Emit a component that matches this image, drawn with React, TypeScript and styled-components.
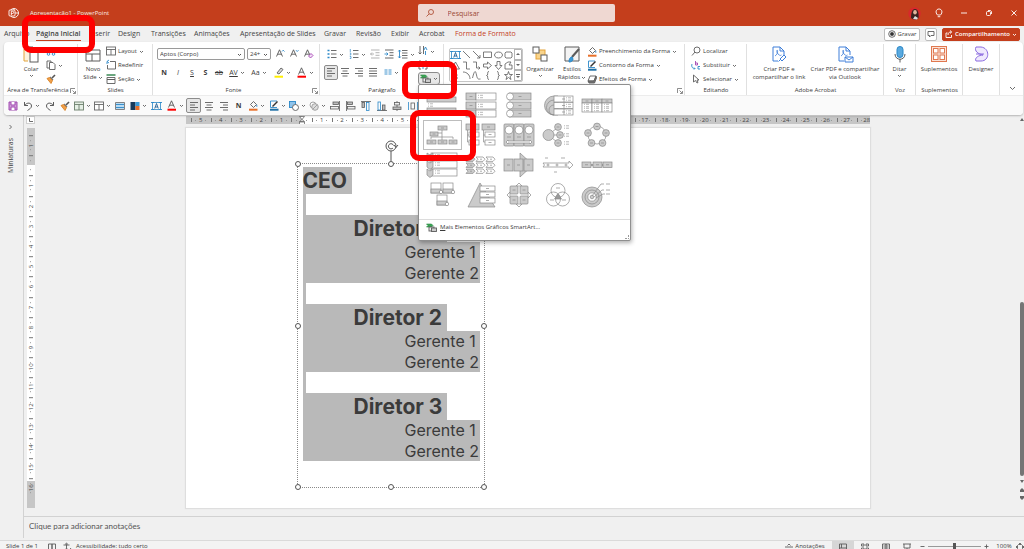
import React from 'react';
import styled, { createGlobalStyle, css } from 'styled-components';

const ACCENT = '#c43e1c';
const INK = '#3b3b3b';
const BLUE = '#2b88c8';

const GlobalStyle = createGlobalStyle`
  * { box-sizing: border-box; }
  body {
    margin: 0;
    background: #f0f0f0;
    color: ${INK};
    font: 6px/9px "Open Sans", "Liberation Sans", sans-serif;
    overflow: hidden;
  }
  button, input, select { font: inherit; color: inherit; margin: 0; padding: 0; }
  svg { display: block; flex: none; overflow: visible; }
`;

const Page = styled.div`
  position: relative;
  min-height: 100vh;
  display: flex;
  flex-direction: column;
`;

const PlainButton = styled.button`
  border: 0;
  background: none;
  display: flex;
  align-items: center;
  justify-content: center;
  gap: 2px;
  white-space: nowrap;
`;

/* ---------- icons ---------- */

type IconProps = { w?: number; h?: number; c?: string; sw?: number; children: React.ReactNode };
const Icon = ({ w = 10, h = 10, c = '#5c5c5c', sw = 0.9, children }: IconProps) => (
  <svg width={w} height={h} viewBox={`0 0 ${w} ${h}`} fill="none" stroke={c} strokeWidth={sw} aria-hidden="true">
    {children}
  </svg>
);

const Chevron = () => (
  <Icon w={5} h={5}><path d="M1 2l1.500 1.500L4 2" /></Icon>
);
const Lines = ({ kind }: { kind: 'left' | 'center' | 'right' | 'full' }) => {
  const d = {
    left: 'M1 1.500h8M1 4h5M1 6.500h8M1 9h5',
    center: 'M1 1.500h8M2.500 4h5M1 6.500h8M2.500 9h5',
    right: 'M1 1.500h8M4 4h5M1 6.500h8M4 9h5',
    full: 'M1 1.500h8M1 4h8M1 6.500h8M1 9h8',
  }[kind];
  return <Icon><path d={d} /></Icon>;
};
const Brush = () => (
  <Icon><path d="M6 4l3-3" stroke="#555" strokeWidth="1.6" /><path d="M4 3l3 3" stroke="#777" strokeWidth="1.2" /><path d="M1 4.500l2.500-1 3 3L5 9.500z" fill="#f0a04b" stroke="#d98327" /></Icon>
);
const Bucket = () => (
  <Icon h={11}><path d="M2.500 4.500L5.500 1.500l3 3-3 3z" /><path d="M8.800 4.800v2" stroke={BLUE} /><path d="M1 9.700h8.500" stroke="#e8702a" strokeWidth="2" /></Icon>
);
const PenLine = () => (
  <Icon h={11}><path d="M8 1H1.500v6.500H8" stroke={BLUE} /><path d="M3.500 6.500L8.500 1.500" stroke="#333" strokeWidth="1.5" /><path d="M1 9.700h8.500" stroke="#1d6fa5" strokeWidth="2" /></Icon>
);
const SlideIcon = ({ c = '#666', fill = '#fff' }: { c?: string; fill?: string }) => (
  <Icon c={c}><rect x="0.5" y="1" width="9" height="8" fill={fill} /><path d="M0.500 3.500h9M5 3.500v5.500" /></Icon>
);
const TextBoxIcon = () => (
  <Icon w={11} c={BLUE}><rect x="1.5" y="1.5" width="8" height="7" strokeWidth="0.8" /><path d="M0 1.500h3M8 1.500h3M0 8.500h3M8 8.500h3" /><path d="M3.700 7.500l1.800-5 1.800 5M4.400 6h2.200" stroke="#1d5e94" /></Icon>
);
const Undo = ({ flip }: { flip?: boolean }) => (
  <Icon sw={1}><g transform={flip ? 'translate(10 0) scale(-1 1)' : undefined}><path d="M1.500 1v3.500H5M1.500 4.500C4 1 8.500 1.500 8.500 5 8.500 7 6.500 8 4.500 9.500" /></g></Icon>
);
const SmartArtIcon = () => (
  <Icon w={11} h={9}><path d="M0.500 1h5l1.500 1.500L5.500 4H0.500L2 2.500z" fill="#3aa655" stroke="#2b8a44" strokeWidth="0.6" /><rect x="3" y="4" width="5" height="4" fill="#eee" /><rect x="5.500" y="5" width="5" height="3.500" fill="#ccc" /></Icon>
);
const LetterA = ({ bar, mark }: { bar?: string; mark?: 'up' | 'down' | 'clear' }) => (
  <Icon h={11}>
    <path d="M1.500 7.500L4.500 0.800l3 6.700M2.600 5.200h3.800" stroke="#555" />
    {bar && <path d="M0.500 9.700h8.500" stroke={bar} strokeWidth="2" />}
    {mark === 'up' && <path d="M7 2.500l1.200-1.300L9.500 2.500" stroke={BLUE} />}
    {mark === 'down' && <path d="M7 1.200l1.200 1.300L9.500 1.200" stroke={BLUE} />}
    {mark === 'clear' && <path d="M5.500 7L8 4.500l2 2L7.500 9z" stroke="#a445b2" fill="#f3dcf6" />}
  </Icon>
);
const Bullets = ({ numbered }: { numbered?: boolean }) => (
  <Icon><path d="M4 1.500h5.500M4 5h5.500M4 8.500h5.500" /><path d={numbered ? 'M1.300 0v3M0.800 4h1v2h-1M0.800 7.500h1.200v2H0.800' : 'M0.500 1.500h2M0.500 5h2M0.500 8.500h2'} stroke={BLUE} strokeWidth={numbered ? 0.7 : 1.5} /></Icon>
);
const Indent = ({ out }: { out?: boolean }) => (
  <Icon c={out ? '#aaa' : '#555'}><path d="M1 1h8.500M5.500 3.700h4M5.500 6.300h4M1 9h8.500" /><path d={out ? 'M4 5H0.500M2 3.500L0.500 5 2 6.500' : 'M0.500 5H4M2.500 3.500L4 5 2.500 6.500'} stroke={out ? '#aaa' : BLUE} /></Icon>
);
const Launcher = () => (
  <Icon w={6} h={6} sw={0.7}><path d="M0.500 5V0.500H5M2.500 2.500L5 5M5.500 3v2.500H3" /></Icon>
);
const Overlap = ({ gray }: { gray?: boolean }) => (
  gray
    ? <Icon c="#9a9a9a"><circle cx="4" cy="4" r="3" /><circle cx="6" cy="6" r="3.300" fill="#ddd" /><path d="M4 8l4-4" /></Icon>
    : <Icon><rect x="0.500" y="0.500" width="6" height="6" fill="#8fc3ea" stroke={BLUE} /><circle cx="6.500" cy="6.500" r="3" fill="#fff" /></Icon>
);
const AlignBars = ({ kind }: { kind: number }) => {
  const shapes = [
    <><path d="M9.500 0v10" stroke="#555" /><rect x="3" y="1" width="5.500" height="2.500" fill="#bbb" /><rect x="0.500" y="5.500" width="8" height="2.500" fill="#eee" /></>,
    <><path d="M0.500 0v10" stroke="#555" /><rect x="1.500" y="1" width="5" height="2.500" fill="#bbb" /><rect x="1.500" y="5.500" width="7.500" height="2.500" fill="#eee" /></>,
    <><path d="M0 0.500h10" stroke="#555" /><rect x="1" y="1.500" width="2.500" height="5" fill="#bbb" /><rect x="5.500" y="1.500" width="2.500" height="8" stroke={BLUE} /></>,
    <><path d="M0 9.500h10" stroke="#555" /><rect x="1" y="1" width="2.500" height="8" stroke={BLUE} /><rect x="5.500" y="4" width="2.500" height="5" fill="#bbb" /></>,
    <><path d="M5 0v10" stroke="#555" /><rect x="2.500" y="1.500" width="5" height="2.500" fill="#eee" /><rect x="1" y="6" width="8" height="2.500" fill="#bbb" /></>,
    <><path d="M0.500 1v8M9.500 1v8" stroke={BLUE} /><rect x="3" y="2" width="3.500" height="6" /></>,
  ];
  return <Icon sw={0.8}>{shapes[kind]}</Icon>;
};

/* ---------- title bar ---------- */

const TitleBar = styled.header`
  height: 26px;
  padding: 0 0 0 8px;
  display: grid;
  grid-template-columns: 1fr 197px 1fr;
  align-items: center;
  background: ${ACCENT};
  color: #fbe9e4;
`;
const TitleLeft = styled.div`
  display: flex;
  align-items: center;
  gap: 10px;
`;
const SearchField = styled.label`
  height: 18px;
  display: flex;
  align-items: center;
  gap: 14px;
  padding: 0 8px;
  border-radius: 2px;
  background: #efd8d2;
  color: ${ACCENT};
  font-size: 7px;
`;
const SearchInput = styled.input`
  flex: 1;
  min-width: 0;
  border: 0;
  outline: 0;
  background: none;
  &::placeholder { color: #9c4a35; opacity: 1; }
`;
const WindowTools = styled.div`
  display: flex;
  justify-content: flex-end;
  gap: 13px;
  padding-right: 4px;
`;
const ToolButton = styled(PlainButton)`
  width: 12px;
  height: 14px;
`;

/* ---------- tabs ---------- */

const TabBar = styled.nav`
  height: 16px;
  display: flex;
  align-items: center;
  padding: 0 4px;
  font-size: 7px;
`;
const Tab = styled.a<{ $w: number; $active?: boolean; $accent?: boolean }>`
  width: ${p => p.$w}px;
  flex: none;
  color: ${p => (p.$accent ? ACCENT : '#444')};
  text-decoration: none;
  white-space: nowrap;
  font-weight: ${p => (p.$active ? 600 : 400)};
  span {
    display: inline-block;
    height: 13px;
    line-height: 12px;
    border-bottom: 1px solid ${p => (p.$active ? ACCENT : 'transparent')};
  }
`;
const TabActions = styled.div`
  margin-left: auto;
  display: flex;
  gap: 5px;
  font-size: 6px;
`;
const ActionButton = styled(PlainButton)<{ $w: number; $primary?: boolean }>`
  width: ${p => p.$w}px;
  height: 13px;
  border: 1px solid ${p => (p.$primary ? ACCENT : '#bdbdbd')};
  border-radius: 2px;
  background: ${p => (p.$primary ? ACCENT : '#fff')};
  color: ${p => (p.$primary ? '#fff' : INK)};
  font-weight: ${p => (p.$primary ? 600 : 400)};
`;

/* ---------- ribbon ---------- */

const RibbonCard = styled.section`
  position: relative;
  z-index: 2;
  margin: 0 1px 0 4px;
  background: #fff;
  border-radius: 4px;
  box-shadow: 0 1px 2px rgba(0, 0, 0, 0.25);
`;
const Ribbon = styled.div`
  display: flex;
  height: 53px;
  padding-top: 2px;
`;
const Group = styled.section<{ $w: number }>`
  width: ${p => p.$w}px;
  flex: none;
  display: flex;
  flex-direction: column;
  border-right: 1px solid #e0e0e0;
`;
const GroupBody = styled.div<{ $pad?: number; $center?: boolean }>`
  height: 42px;
  display: flex;
  padding-left: ${p => p.$pad ?? 0}px;
  justify-content: ${p => (p.$center ? 'center' : 'flex-start')};
`;
const GroupLabel = styled.div`
  display: flex;
  align-items: center;
  height: 9px;
  padding: 0 1px 0 2px;
  span { flex: 1; text-align: center; white-space: nowrap; }
`;
const Stack = styled.div<{ $w?: number }>`
  width: ${p => (p.$w ? `${p.$w}px` : 'auto')};
  flex: none;
  display: flex;
  flex-direction: column;
`;
const RowButton = styled(PlainButton)`
  height: 14px;
  justify-content: flex-start;
`;
const BigButton = styled.button<{ $w: number }>`
  width: ${p => p.$w}px;
  flex: none;
  border: 0;
  background: none;
  display: flex;
  flex-direction: column;
  align-items: center;
  padding-top: 2px;
  line-height: 8px;
  white-space: nowrap;
  svg + span { margin-top: 2px; }
`;
const BigLine = styled.span`
  display: flex;
  align-items: center;
  gap: 1px;
  height: 8px;
`;
const ToolRow = styled.div`
  display: flex;
  align-items: center;
  height: 18px;
`;
const ToolStack = styled(Stack)`padding-top: 1px;`;
const Slot = styled(PlainButton)<{ $w: number; $on?: boolean }>`
  width: ${p => p.$w}px;
  height: ${p => (p.$on ? 15 : 14)}px;
  flex: none;
  border-radius: 2px;
  font-size: 7px;
  ${p => p.$on && css`background: #e6e6e6; border: 1px solid #8c8c8c;`}
`;
const Combo = styled.select<{ $w: number }>`
  width: ${p => p.$w}px;
  height: 12px;
  margin-right: 2px;
  padding: 0 2px;
  border: 1px solid #9a9a9a;
  border-radius: 2px;
  appearance: none;
  background: #fff
    url("data:image/svg+xml,%3Csvg xmlns='http://www.w3.org/2000/svg' width='5' height='5' fill='none' stroke='%23555'%3E%3Cpath d='M1 2l1.500 1.500L4 2'/%3E%3C/svg%3E")
    no-repeat right 2px center;
`;
const Gallery = styled.div`
  width: 74px;
  height: 34px;
  margin-top: 4px;
  border: 1px solid #c6c6c6;
  border-radius: 2px;
  display: flex;
  overflow: hidden;
`;
const GalleryGrid = styled.div`
  flex: 1;
  display: grid;
  grid-template-columns: repeat(6, 1fr);
  place-items: center;
`;
const GalleryScroll = styled.div`
  width: 8px;
  display: grid;
  button { border: 1px solid #b5b5b5; background: #fff; display: grid; place-items: center; }
`;
const CollapseButton = styled(PlainButton)`
  flex: 1;
  align-items: flex-end;
  padding-bottom: 1px;
`;
const QuickBar = styled.div`
  display: flex;
  align-items: center;
  height: 20px;
  padding-left: 2px;
  border-top: 1px solid #ececec;
  background: #fafafa;
  border-radius: 0 0 4px 4px;
`;
const MenuAnchor = styled.div`
  position: relative;
  height: 13px;
`;
const SmartArtButton = styled(PlainButton)`
  width: 22px;
  height: 13px;
  border: 1px solid #8c8c8c;
  border-radius: 3px;
  background: #e9e9e9;
`;

/* ---------- SmartArt menu ---------- */

const Menu = styled.div`
  position: absolute;
  top: 12px;
  left: 0;
  width: 213px;
  border: 1px solid #8f8f8f;
  border-radius: 2px;
  background: #fff;
  box-shadow: 1px 2px 4px rgba(0, 0, 0, 0.3);
`;
const MenuGrid = styled.div`
  display: grid;
  grid-template-columns: repeat(5, 1fr);
  grid-auto-rows: 30px;
  padding: 5px 14px 9px 4px;
`;
const MenuCell = styled.button<{ $on?: boolean }>`
  display: grid;
  place-items: center;
  border: 1px solid ${p => (p.$on ? '#bdbdbd' : 'transparent')};
  background: none;
  padding: 0;
`;
const MenuFooter = styled.div`
  display: flex;
  align-items: center;
  justify-content: space-between;
  height: 21px;
  padding: 0 1px 5px 7px;
  border-top: 1px solid #dcdcdc;
`;
const MenuMore = styled(PlainButton)`gap: 3px;`;
const Grip = styled.span`
  align-self: flex-end;
  width: 4px;
  height: 4px;
  margin-bottom: -4px;
  border: 1px dotted #999;
  border-width: 0 1px 1px 0;
`;

const G = '#cbcbcb';
const Box = ({ x, y, w, h, on = true, r = 0 }: { x: number; y: number; w: number; h: number; on?: boolean; r?: number }) => (
  <g><rect x={x} y={y} width={w} height={h} rx={r} fill={on ? G : '#fff'} /><path d={`M${x + w / 2 - 1.5} ${y + h / 2}h3`} /></g>
);
const Dots = ({ x, y }: { x: number; y: number }) => (
  <path d={`M${x} ${y - 1.2}h1M${x + 2} ${y - 1.2}h3M${x} ${y + 1.2}h1M${x + 2} ${y + 1.2}h3`} strokeWidth="0.6" />
);

const smartArt: { name: string; art: React.ReactNode }[] = [
  { name: 'Lista de blocos', art: <><rect x="1" y="5" width="29" height="5" fill={G} /><Dots x={2} y={13} /><rect x="1" y="16" width="29" height="5" fill={G} /></> },
  { name: 'Lista de marcadores', art: [1, 10, 18].map(y => <g key={y}><Box x={1} y={y} w={10} h={7} /><rect x="11" y={y} width="20" height="7" fill="#fff" /><Dots x={13} y={y + 3.5} /></g>) },
  { name: 'Lista com imagens', art: [1, 10, 18].map(y => <g key={y}><Box x={6} y={y} w={22} h={7} /><circle cx="7" cy={y + 3.5} r="3.500" fill="#fff" /></g>) },
  { name: 'Lista de alvos', art: <><path d="M12 4a9.500 9.500 0 0 0 0 19h4V4zM12 8a6 6 0 0 0 0 15M12 13a4 4 0 0 0 0 10" fill={G} />{[4, 10.5, 17].map(y => <g key={y}><Box x={12} y={y} w={19} h={6} on={false} /><path d={`M22 ${y}v6`} /><Dots x={24} y={y + 3} /></g>)}</> },
  { name: 'Lista em tabela', art: [1, 11, 21].map(x => <g key={x}><Box x={x} y={7} w={10} h={4} /><rect x={x} y="11" width="10" height="9" fill="#fff" /><Dots x={x + 2} y={13.5} /><Dots x={x + 2} y={17.5} /></g>) },
  { name: 'Organograma', art: <><path d="M16 8v12M5 17v-2h22v2M12 11h4" /><Box x={12} y={4} w={9} h={4} /><Box x={4} y={10} w={8} h={4} /><Box x={1} y={18} w={9} h={4} /><Box x={12} y={18} w={9} h={4} /><Box x={23} y={18} w={8} h={4} /></> },
  { name: 'Lista hierárquica', art: [1, 17].map(x => <g key={x}><path d={`M${x + 1.5} 8v12h3M${x + 1.5} 13h3`} /><Box x={x} y={2} w={13} h={6} /><Box x={x + 3} y={10} w={10} h={5} on={false} /><Box x={x + 3} y={18} w={10} h={5} on={false} /></g>) },
  { name: 'Lista contínua', art: <>{[1, 11, 21].map(x => <g key={x}><rect x={x} y="2" width="10" height="22" rx="1" fill={G} /><circle cx={x + 5} cy="8" r="4" fill="#fff" /><path d={`M${x + 3} 15h4`} /></g>)}<path d="M3 20l2-2v1h22v-1l2 2-2 2v-1H5v1z" fill="#fff" /></> },
  { name: 'Radial', art: <><path d="M10 10l5-4M11 13h4M10 16l5 4" /><circle cx="6.500" cy="13" r="5.500" fill={G} />{[5, 13, 21].map(y => <g key={y}><circle cx={y === 13 ? 18 : 16} cy={y} r="3.400" fill={G} /><path d={`M${y === 13 ? 16.5 : 14.5} ${y}h3`} /><Dots x={22} y={y} /></g>)}</> },
  { name: 'Ciclo', art: <><circle cx="16" cy="13" r="9" />{[[16, 4.5], [25, 11], [21.5, 21], [10.5, 21], [7, 11]].map(([x, y]) => <g key={x}><circle cx={x} cy={y} r="3.400" fill={G} /><path d={`M${x - 1.5} ${y}h3`} /></g>)}</> },
  { name: 'Lista vertical em divisas', art: [1, 9, 17].map(y => <g key={y}><rect x="5" y={y} width="26" height="7" fill="#fff" /><path d={`M1 ${y}l3 2 3-2v6l-3 2.500-3-2.500z`} fill={G} /><Dots x={9} y={y + 3} /></g>) },
  { name: 'Processo em divisas', art: [5, 11, 17].map(y => <g key={y}>{[1, 11, 21].map((x, i) => <path key={x} d={`M${x} ${y}h7l2 2.200-2 2.200h-7l2-2.200zM${x + 4} ${y + 2.2}h2`} fill={i ? '#fff' : G} />)}</g>) },
  { name: 'Processo em seta', art: <><path d="M17 1l13 12-13 12z" fill={G} /><Box x={1} y={7} w={9} h={12} /><Box x={11} y={7} w={9} h={12} /><Box x={21} y={7} w={9} h={12} /></> },
  { name: 'Linha do tempo', art: <><path d="M1 11h26V9l4 4-4 4v-2H1l1.500-2z" fill="#fff" /><circle cx="6" cy="13" r="1" /><circle cx="15" cy="13" r="1" /><circle cx="24" cy="13" r="1" /><path d="M3 6h3M19 6h4M12 20h3" /></> },
  { name: 'Processo básico', art: <><path d="M9 13h14" strokeWidth="1.5" />{[1, 12, 22].map(x => <Box key={x} x={x} y={10} w={9} h={5.5} />)}</> },
  { name: 'Lista de imagens', art: [[5, 1], [17, 1], [11, 13]].map(([x, y]) => <g key={x}><rect x={x} y={y} width="10" height="10" fill="#fff" /><rect x={x} y={y + 6} width="10" height="4" fill={G} /><circle cx={x + 10} cy={y + 9} r="1.700" fill="#fff" /></g>) },
  { name: 'Lista em pirâmide', art: <><path d="M15 1L3 25h27z" fill={G} />{[4, 10, 16].map(y => <Box key={y} x={15} y={y} w={15} h={5} on={false} />)}</> },
  { name: 'Matriz', art: <><path d="M16 1l3 3h-6zM16 25l3-3h-6zM4 13l3-3v6zM28 13l-3-3v6z" fill="#fff" /><Box x={7} y={4} w={8} h={8} r={1} /><Box x={17} y={4} w={8} h={8} r={1} /><Box x={7} y={14} w={8} h={8} r={1} /><Box x={17} y={14} w={8} h={8} r={1} /></> },
  { name: 'Venn', art: <><circle cx="16" cy="8.500" r="7" fill="#fff" /><circle cx="11.500" cy="17" r="7" /><circle cx="20.500" cy="17" r="7" /><path d="M16 12l3.500 5h-7z" fill="#999" /><path d="M14 6h4M8 18h4M20 18h4" /></> },
  { name: 'Alvo', art: <><circle cx="11" cy="15" r="10" fill={G} /><circle cx="11" cy="15" r="7" /><circle cx="11" cy="15" r="4.200" fill="#fff" /><circle cx="11" cy="15" r="1.800" fill={G} /><path d="M11 14L20 2h3M13 15l8-7h2M15 16l7-4h2M25 2h4M25 8h4M25 12h4" /></> },
];

/* ---------- editor ---------- */

const Workspace = styled.main`
  display: flex;
  height: 425px;
`;
const Thumbs = styled.aside`
  width: 24px;
  height: 423px;
  flex: none;
  border-right: 1px solid #d2d2d2;
  display: flex;
  flex-direction: column;
  align-items: center;
  padding: 8px 3px 0 0;
  gap: 8px;
  font-size: 7px;
`;
const VerticalText = styled.span`
  writing-mode: vertical-rl;
  transform: rotate(180deg);
`;
const EditorColumn = styled.div`
  flex: 1;
  min-width: 0;
`;
const Editor = styled.div`
  display: flex;
  height: 401px;
  padding: 1px 0 0 2px;
`;
const RulerColumn = styled.div`
  width: 9px;
  flex: none;
`;
const RulerCorner = styled.div`
  height: 8px;
  margin-bottom: 4px;
  border: 1px solid #cfcfcf;
  background: #fff;
  display: grid;
  place-items: center;
`;
const rulerBase = css`
  display: flex;
  overflow: hidden;
  font-size: 6px;
  line-height: 8px;
  color: #444;
`;
const VRuler = styled.div`
  ${rulerBase}
  flex-direction: column;
  width: 8px;
  height: 380px;
  margin-left: 1px;
  padding-top: 7px;
  background: linear-gradient(#c6c6c6 37px, #fff 37px, #fff 353px, #c6c6c6 353px);
`;
const HRuler = styled.div`
  ${rulerBase}
  position: relative;
  height: 8px;
  margin-bottom: 4px;
  padding-left: 5px;
  background: linear-gradient(90deg, #c6c6c6 116px, #fff 116px, #fff 298px, #c6c6c6 298px);
`;
const HMark = styled.span`
  flex: 0 0 2.975%;
  text-align: center;
  background:
    linear-gradient(#777, #777) 0 50% / 1px 4px no-repeat,
    linear-gradient(#999, #999) 25% 50% / 1px 1px no-repeat,
    linear-gradient(#999, #999) 75% 50% / 1px 1px no-repeat;
`;
const VMark = styled.span`
  flex: 0 0 5.416%;
  display: flex;
  justify-content: center;
  writing-mode: vertical-rl;
  transform: rotate(180deg);
  background:
    linear-gradient(#777, #777) 50% 100% / 4px 1px no-repeat,
    linear-gradient(#999, #999) 50% 25% / 1px 1px no-repeat,
    linear-gradient(#999, #999) 50% 75% / 1px 1px no-repeat;
`;
const IndentMarker = styled.div`
  position: absolute;
  left: 113px;
  top: 0;
`;
const Canvas = styled.div`
  flex: 1;
  display: flex;
  justify-content: center;
`;
const SlideColumn = styled.div`
  width: 684px;
  flex: none;
`;
const Slide = styled.div`
  position: relative;
  height: 380px;
  background: #fff;
  box-shadow: 0 0 1px 1px #dedede;
`;
const TextFrame = styled.div`
  position: absolute;
  left: 111px;
  top: 35px;
  width: 188px;
  height: 325px;
  padding: 3px 4px 0 5px;
  border: 1px dotted #8a8a8a;
  font-family: Inter, sans-serif;
`;
const lineKinds = {
  head: { h: 27, end: 128, indent: 0 },
  blank: { h: 21, end: 174, indent: 0 },
  director: { h: 27, end: 33, indent: 51 },
  manager: { h: 21, end: 0, indent: 102 },
  last: { h: 20, end: 0, indent: 102 },
};
const TextLine = styled.div<{ $kind: keyof typeof lineKinds }>`
  height: ${p => lineKinds[p.$kind].h}px;
  line-height: ${p => lineKinds[p.$kind].h}px;
  margin-right: ${p => lineKinds[p.$kind].end}px;
  padding-left: ${p => lineKinds[p.$kind].indent}px;
  background: #b9b9b9;
  white-space: nowrap;
  font-size: ${p => (p.$kind === 'head' || p.$kind === 'director' ? 21 : 16)}px;
  font-weight: ${p => (p.$kind === 'head' || p.$kind === 'director' ? 700 : 400)};
`;
const Handle = styled.i<{ $x: number; $y: number }>`
  position: absolute;
  left: calc(${p => p.$x}% - 3px);
  top: calc(${p => p.$y}% - 3px);
  width: 6px;
  height: 6px;
  border: 1px solid #555;
  border-radius: 50%;
  background: #fff;
`;
const RotateHandle = styled.div`
  position: absolute;
  left: calc(50% - 6px);
  top: -24px;
`;
const Scrollbar = styled.div`
  width: 4px;
  flex: none;
  display: flex;
  flex-direction: column;
  align-items: center;
  gap: 4px;
  padding-top: 2px;
`;
const ScrollThumb = styled.div`
  width: 4px;
  height: 174px;
  margin-top: 176px;
  border-radius: 2px;
  background: #757575;
`;
const Notes = styled.div`
  height: 22px;
  padding: 3px 5px;
  border-top: 1px solid #d2d2d2;
`;
const NotesInput = styled.input`
  width: 100%;
  height: 12px;
  display: block;
  border: 0;
  outline: 0;
  background: none;
  font-family: Lato, "Open Sans", sans-serif;
  font-size: 8px;
  &::placeholder { color: #555; opacity: 1; }
`;

/* ---------- status bar ---------- */

const StatusBar = styled.footer`
  display: flex;
  align-items: center;
  height: 12px;
  padding-left: 6px;
  border-top: 1px solid #dadada;
  background: #f3f3f3;
`;
const StatusItem = styled(PlainButton)<{ $w?: number; $on?: boolean; $right?: boolean }>`
  width: ${p => (p.$w ? `${p.$w}px` : 'auto')};
  height: 12px;
  flex: none;
  margin-left: ${p => (p.$right ? 'auto' : '0')};
  background: ${p => (p.$on ? '#d6d6d6' : 'none')};
`;
const StatusText = styled.span`margin-right: 8px;`;
const ZoomRange = styled.input`
  width: 53px;
  height: 8px;
  appearance: none;
  background: linear-gradient(#999, #999) center / 100% 1px no-repeat;
  &::-webkit-slider-thumb {
    appearance: none;
    width: 3px;
    height: 7px;
    background: #555;
  }
`;

/* ---------- highlight frames ---------- */

const HighlightFrame = styled.div<{ $x: number; $y: number; $w: number; $h: number }>`
  position: absolute;
  z-index: 5;
  left: ${p => p.$x}px;
  top: ${p => p.$y}px;
  width: ${p => p.$w}px;
  height: ${p => p.$h}px;
  border: 6px solid #fe0000;
  border-radius: 9px;
  pointer-events: none;
`;

const tabs: { label: string; w: number; active?: boolean; accent?: boolean }[] = [
  { label: 'Arquivo', w: 32 },
  { label: 'Página Inicial', w: 53, active: true },
  { label: 'Inserir', w: 29 },
  { label: 'Design', w: 33 },
  { label: 'Transições', w: 43 },
  { label: 'Animações', w: 46 },
  { label: 'Apresentação de Slides', w: 84 },
  { label: 'Gravar', w: 32 },
  { label: 'Revisão', w: 35 },
  { label: 'Exibir', w: 28 },
  { label: 'Acrobat', w: 36 },
  { label: 'Forma de Formato', w: 70, accent: true },
];

const galleryShapes = [
  'M1 1l7 7', 'M1 1l7 7M8 5v3H5', 'M0.500 2h8v5.500h-8z', 'M4.500 2a4 3 0 1 0 .01 0z', 'M2 2h5l1 1v4l-1 1H2L1 7V3z',
  'M4.500 1l4 7h-8z', 'M1 1h3.500v7H8', 'M1 1h3.500v6H8M6.500 5.500L8 7 6.500 8.500', 'M0.500 3h4V1l4 3.500-4 3.500V6h-4z', 'M3 0.500v4H1l3.500 4 3.500-4H6v-4z', 'M1 8V3l3-2h3L5 4h3v4z',
  'M2 4a2 2 0 1 1 3 2c2 0 2 2 0 2s-4-1-3-4z', 'M1 1c4 0 7 3 7 7', 'M0.500 7c2-8 3-8 4-3s2 4 4 4', 'M6 0.500c-2 0-1 2-1.500 3.500L3.500 4.500l1 .5C5 6.500 4 8.500 6 8.500', 'M3 0.500c2 0 1 2 1.500 3.500l1 .5-1 .5C4 6.500 5 8.500 3 8.500', 'M4.500 0.500l1 3h3L6 5.500l1 3-2.500-2-2.500 2 1-3L0.500 3.500h3z',
];

const quick: { label: string; w: number; icon: React.ReactNode; menu?: boolean; on?: boolean }[] = [
  { label: 'Salvar', w: 14, icon: <Icon c="#a04bb0" sw={1}><path d="M1 1h8v8H1z" fill="#cf9ad8" /><path d="M3 1v3h4V1M3 9V6h4v3" fill="#fff" /></Icon> },
  { label: 'Desfazer', w: 22, icon: <Undo />, menu: true },
  { label: 'Refazer', w: 15, icon: <Undo flip /> },
  { label: 'Pincel de formatação', w: 15, icon: <Brush /> },
  { label: 'Novo slide', w: 20, icon: <SlideIcon c="#6c7f6c" fill="#e5efe5" />, menu: true },
  { label: 'Layout', w: 20, icon: <SlideIcon />, menu: true },
  { label: 'Tamanho do slide', w: 16, icon: <Icon c="#777"><path d="M0.500 1.500h9v7h-9z" fill="#bcdcf3" /><path d="M1 3.500h8M1 6.500h8" stroke={BLUE} /></Icon> },
  { label: 'Variantes', w: 20, icon: <Icon c="none"><path d="M0.500 1h5v8h-5z" fill="#163a5c" /><path d="M5.500 1h4v4h-4z" fill="#3b9ad6" /><path d="M5.500 5h4v4h-4z" fill="#e8702a" /></Icon>, menu: true },
  { label: 'Caixa de texto', w: 16, icon: <TextBoxIcon /> },
  { label: 'Cor da fonte', w: 22, icon: <LetterA bar="#f00" />, menu: true },
  { label: 'Alinhar à esquerda', w: 15, icon: <Lines kind="left" />, on: true },
  { label: 'Centralizar', w: 15, icon: <Lines kind="center" /> },
  { label: 'Alinhar à direita', w: 15, icon: <Lines kind="right" /> },
  { label: 'Negrito', w: 15, icon: <b>N</b> },
  { label: 'Preenchimento', w: 21, icon: <Bucket />, menu: true },
  { label: 'Contorno', w: 20, icon: <PenLine />, menu: true },
  { label: 'Organizar formas', w: 20, icon: <Overlap />, menu: true },
  { label: 'Mesclar formas', w: 20, icon: <Overlap gray />, menu: true },
  ...['Alinhar objetos à direita', 'Alinhar objetos à esquerda', 'Alinhar acima', 'Alinhar abaixo', 'Alinhar ao centro', 'Distribuir'].map((label, i) => ({
    label, w: i % 2 ? 15 : 16, icon: <AlignBars kind={i} />,
  })),
];

const paragraphs: [keyof typeof lineKinds, string][] = [
  ['head', 'CEO'],
  ...[1, 2, 3].flatMap((n): [keyof typeof lineKinds, string][] => [
    ['blank', ''],
    ['director', `Diretor ${n}`],
    ['manager', 'Gerente 1'],
    ['last', 'Gerente 2'],
  ]),
];

const PdfIcon = ({ mail }: { mail?: boolean }) => (
  <Icon w={15} h={17} c="#3f7fd9" sw={1}>
    <path d="M6 15H1V1h7l4 4v4M8 1v4h4" />
    <path d="M3 10c2-1 3-4 2.500-5.500S4 6 6 8s3 1.500 3.500 1" strokeWidth="0.8" />
    {mail ? <path d="M7 11h8v5H7zM7 11l4 3 4-3" fill="#fff" /> : <path d="M8 13l4-4 2 2-4 4zM6.500 15.500l2-2" />}
  </Icon>
);

const arrow = (d: string) => <Icon w={4} h={4} c="none"><path d={d} fill="#666" /></Icon>;

export default function App() {
  return (
    <Page>
      <GlobalStyle />
      <TitleBar>
        <TitleLeft>
          <Icon w={12} h={12} c="#fff"><circle cx="6" cy="6" r="4.500" /><path d="M6 1.500V6h4.500" /><rect x="1" y="3" width="6" height="6" rx="1" fill={ACCENT} /><path d="M3.300 8V4.300h1.300a1 1 0 0 1 0 2.200H3.300" /></Icon>
          <span>Apresentação1 - PowerPoint</span>
        </TitleLeft>
        <SearchField>
          <Icon w={8} h={8} c="#b0523a"><circle cx="5" cy="3" r="2.500" /><path d="M3.200 4.800L0.500 7.500" /></Icon>
          <SearchInput placeholder="Pesquisar" aria-label="Pesquisar" />
        </SearchField>
        <WindowTools>
          <ToolButton aria-label="Conta"><Icon w={13} h={13} c="none"><circle cx="6.500" cy="6.500" r="6.200" fill="#d8282c" /><path d="M3 11c0-5 1-9 4-9s4 4 3.500 9c-2 2-5 2-7.500 0z" fill="#3a2320" /><ellipse cx="7" cy="5.300" rx="1.800" ry="2.300" fill="#e2b39b" /><path d="M5 12l2-3 3 2-1 1.500z" fill="#ddd" /></Icon></ToolButton>
          <ToolButton aria-label="Dicas"><Icon c="#fff"><path d="M3.500 7C1 4.500 2 1 5 1s4 3.500 1.500 6zM3.700 8.700h2.600" /></Icon></ToolButton>
          <ToolButton aria-label="Minimizar"><Icon w={6} c="#fff"><path d="M0 5h6" /></Icon></ToolButton>
          <ToolButton aria-label="Restaurar"><Icon w={6} h={6} c="#fff"><rect x="0.500" y="1.500" width="4" height="4" rx="1" /><path d="M2 0.500h2.500l1 1V4" /></Icon></ToolButton>
          <ToolButton aria-label="Fechar"><Icon w={6} h={6} c="#fff"><path d="M0.500 0.500l5 5M5.500 0.500l-5 5" /></Icon></ToolButton>
        </WindowTools>
      </TitleBar>

      <TabBar>
        {tabs.map(t => (
          <Tab key={t.label} href="#" $w={t.w} $active={t.active} $accent={t.accent}><span>{t.label}</span></Tab>
        ))}
        <TabActions>
          <ActionButton $w={36}><Icon w={8} h={8}><circle cx="4" cy="4" r="3.300" /><circle cx="4" cy="4" r="1.700" fill="#333" /></Icon>Gravar</ActionButton>
          <ActionButton $w={12} aria-label="Comentários"><Icon w={8} h={8}><path d="M1 1.500h6v4H4L2.500 7V5.500H1z" /></Icon></ActionButton>
          <ActionButton $w={78} $primary><Icon w={8} h={8} c="#fff"><path d="M2.500 3H1v4.500h5.500V5M3 5c0-2 1-3 3-3M5 0.500L6.800 2 5 3.500" /></Icon>Compartilhamento<Icon w={5} h={5} c="#fff"><path d="M1 2l1.500 1.500L4 2" /></Icon></ActionButton>
        </TabActions>
      </TabBar>

      <RibbonCard>
        <Ribbon>
          <Group $w={74}>
            <GroupBody $pad={12}>
              <BigButton $w={30}>
                <Icon w={16} h={17} sw={1}><path d="M5 15H1V3h12v3" stroke="#e3a33b" fill="#fdf3df" /><path d="M4 3V1h6v2" /><rect x="7" y="6" width="8" height="10" fill="#fff" /></Icon>
                <BigLine>Colar</BigLine><Chevron />
              </BigButton>
              <Stack>
                <RowButton aria-label="Recortar"><Icon><path d="M2 1l5 6M8 1L3 7" /><circle cx="2.500" cy="8" r="1.300" stroke={BLUE} /><circle cx="7.500" cy="8" r="1.300" stroke={BLUE} /></Icon></RowButton>
                <RowButton aria-label="Copiar"><Icon><path d="M3 8H1V1h4v1" /><path d="M3.500 2.500H7L9 4.500v5H3.500z" fill="#fff" /></Icon><Chevron /></RowButton>
                <RowButton aria-label="Pincel"><Brush /></RowButton>
              </Stack>
            </GroupBody>
            <GroupLabel><span>Área de Transferência</span><Launcher /></GroupLabel>
          </Group>

          <Group $w={75}>
            <GroupBody $pad={2}>
              <BigButton $w={26}>
                <Icon w={16} h={17} sw={1}><path d="M1 4h14v11H1zM1 8h14M7 8v7" /><path d="M3 1v6M0 4h6" stroke="#3aa655" /></Icon>
                <BigLine>Novo</BigLine><BigLine>Slide<Chevron /></BigLine>
              </BigButton>
              <Stack>
                <RowButton><SlideIcon />Layout<Chevron /></RowButton>
                <RowButton><Icon><path d="M4 1.500h5.500V9h-8V5" /><path d="M1 4V1.500L3 0M1 1.500l2 1.500" stroke={BLUE} /></Icon>Redefinir</RowButton>
                <RowButton><Icon><path d="M0.500 1h9" stroke="#3a8a55" strokeWidth="1.5" /><path d="M1 3.500h8v2H1zM1 5.500h8v4H1z" /></Icon>Seção<Chevron /></RowButton>
              </Stack>
            </GroupBody>
            <GroupLabel><span>Slides</span></GroupLabel>
          </Group>

          <Group $w={167}>
            <GroupBody $pad={4}>
              <ToolStack>
                <ToolRow>
                  <Combo $w={88} aria-label="Fonte"><option>Aptos (Corpo)</option></Combo>
                  <Combo $w={24} aria-label="Tamanho da fonte"><option>24+</option></Combo>
                  <Slot $w={14} aria-label="Aumentar fonte"><LetterA mark="up" /></Slot>
                  <Slot $w={14} aria-label="Diminuir fonte"><LetterA mark="down" /></Slot>
                  <Slot $w={14} aria-label="Limpar formatação"><LetterA mark="clear" /></Slot>
                </ToolRow>
                <ToolRow>
                  <Slot $w={14}><b>N</b></Slot>
                  <Slot $w={14}><i>I</i></Slot>
                  <Slot $w={14}><u>S</u></Slot>
                  <Slot $w={13}><b>S</b></Slot>
                  <Slot $w={14}><s>ab</s></Slot>
                  <Slot $w={22}><u>AV</u><Chevron /></Slot>
                  <Slot $w={22}>Aa<Chevron /></Slot>
                  <Slot $w={24} aria-label="Realce"><Icon h={11}><path d="M3 6l4-5 2 1.500L5 7z" fill="#ddd" /><path d="M0.500 9.700h8.500" stroke="#ffee00" strokeWidth="2" /></Icon><Chevron /></Slot>
                  <Slot $w={22} aria-label="Cor da fonte"><LetterA bar="#f00" /><Chevron /></Slot>
                </ToolRow>
              </ToolStack>
            </GroupBody>
            <GroupLabel><span>Fonte</span><Launcher /></GroupLabel>
          </Group>

          <Group $w={124}>
            <GroupBody $pad={4}>
              <ToolStack $w={94}>
                <ToolRow>
                  <Slot $w={22} aria-label="Marcadores"><Bullets /><Chevron /></Slot>
                  <Slot $w={22} aria-label="Numeração"><Bullets numbered /><Chevron /></Slot>
                  <Slot $w={14} aria-label="Diminuir recuo"><Indent out /></Slot>
                  <Slot $w={14} aria-label="Aumentar recuo"><Indent /></Slot>
                  <Slot $w={20} aria-label="Espaçamento"><Icon><path d="M4 1.500h5.500M4 4h5.500M4 6.500h5.500M4 9h5.500" /><path d="M1.500 1v8M0.300 2.500l1.200-1.500 1.200 1.500M0.300 7.500L1.500 9l1.200-1.500" stroke={BLUE} /></Icon><Chevron /></Slot>
                </ToolRow>
                <ToolRow>
                  <Slot $w={14} $on aria-label="À esquerda"><Lines kind="left" /></Slot>
                  <Slot $w={14} aria-label="Centro"><Lines kind="center" /></Slot>
                  <Slot $w={14} aria-label="À direita"><Lines kind="right" /></Slot>
                  <Slot $w={14} aria-label="Justificar"><Lines kind="full" /></Slot>
                  <Slot $w={22} aria-label="Colunas"><Icon w={8} c={BLUE}><path d="M0.500 3h3M4.500 3h3M0.500 5h3M4.500 5h3M0.500 7h3M4.500 7h3" /></Icon><Chevron /></Slot>
                </ToolRow>
              </ToolStack>
              <Stack>
                <RowButton aria-label="Direção do texto"><Icon><path d="M2 0v8M0.500 6.500L2 8l1.500-1.500M5.500 0v8" /><path d="M6 4l1.500-3L9 4M7.500 5v4" stroke={BLUE} /></Icon><Chevron /></RowButton>
                <RowButton aria-label="Alinhar texto"><Icon><path d="M3 1H1v8h2M7 1h2v8H7" /><path d="M5 1v8M3.500 5h3" stroke={BLUE} /></Icon><Chevron /></RowButton>
                <MenuAnchor>
                  <SmartArtButton aria-label="Converter em SmartArt"><SmartArtIcon /><Chevron /></SmartArtButton>
                  <Menu>
                    <MenuGrid>
                      {smartArt.map((s, i) => (
                        <MenuCell key={s.name} $on={i === 5} aria-label={s.name}>
                          <Icon w={32} h={26} c="#8a8a8a" sw={0.7}>{s.art}</Icon>
                        </MenuCell>
                      ))}
                    </MenuGrid>
                    <MenuFooter>
                      <MenuMore><SmartArtIcon /><span><u>M</u>ais Elementos Gráficos SmartArt...</span></MenuMore>
                      <Grip />
                    </MenuFooter>
                  </Menu>
                </MenuAnchor>
              </Stack>
            </GroupBody>
            <GroupLabel><span>Parágrafo</span></GroupLabel>
          </Group>

          <Group $w={241}>
            <GroupBody $pad={5}>
              <Gallery>
                <GalleryGrid>
                  <TextBoxIcon />
                  {galleryShapes.map(d => <Icon key={d} w={9} h={9} sw={0.8}><path d={d} /></Icon>)}
                </GalleryGrid>
                <GalleryScroll>
                  <button aria-label="Anterior">{arrow('M0 3l2-2 2 2z')}</button>
                  <button aria-label="Próximo">{arrow('M0 1l2 2 2-2z')}</button>
                  <button aria-label="Mais formas">{arrow('M0 0h4v1H0zM0 2l2 2 2-2z')}</button>
                </GalleryScroll>
              </Gallery>
              <BigButton $w={34}>
                <Icon w={16} h={17} sw={1}><rect x="4" y="4" width="9" height="9" fill="#f9d48b" stroke="#e3a33b" /><rect x="1" y="1" width="6" height="6" fill="#fff" /><rect x="9" y="9" width="6" height="6" fill="#fff" /></Icon>
                <BigLine>Organizar</BigLine><Chevron />
              </BigButton>
              <BigButton $w={30}>
                <Icon w={16} h={17} sw={1}><path d="M1 1h14v14H1z" fill="#f4f4f4" /><path d="M15 3L8 11" strokeWidth="2" /><path d="M5 16c0-3 1-5 3-5l1 2c0 2-2 3-4 3z" fill="#3b9ad6" stroke={BLUE} /></Icon>
                <BigLine>Estilos</BigLine><BigLine>Rápidos<Chevron /></BigLine>
              </BigButton>
              <Stack>
                <RowButton><Bucket />Preenchimento da Forma<Chevron /></RowButton>
                <RowButton><PenLine />Contorno da Forma<Chevron /></RowButton>
                <RowButton><Icon><path d="M3 2h6L7 7H1z" fill="#fff" /><path d="M9 2l0.500 2-2 5H2L1 7h6z" fill="#777" /></Icon>Efeitos de Forma<Chevron /></RowButton>
              </Stack>
            </GroupBody>
            <GroupLabel><span>Desenho</span><Launcher /></GroupLabel>
          </Group>

          <Group $w={62}>
            <GroupBody $pad={6}>
              <Stack>
                <RowButton><Icon><circle cx="6" cy="4" r="3" /><path d="M4 6L1 9.500" /></Icon>Localizar</RowButton>
                <RowButton><Icon><path d="M1 4c-1 3 1 5 3 4.500M3 7.500l1 1-1 1" stroke={BLUE} /><path d="M4.500 1v4h2V3h-2" stroke="#a445b2" /><path d="M9 6.500H7V9h2" stroke={BLUE} /></Icon>Substituir<Chevron /></RowButton>
                <RowButton><Icon><path d="M2.500 1v7l2-1.500L6 9l1-.5-1-2.500h2z" /></Icon>Selecionar<Chevron /></RowButton>
              </Stack>
            </GroupBody>
            <GroupLabel><span>Editando</span></GroupLabel>
          </Group>

          <Group $w={137}>
            <GroupBody $center>
              <BigButton $w={60}><PdfIcon /><BigLine>Criar PDF e</BigLine><BigLine>compartilhar o link</BigLine></BigButton>
              <BigButton $w={72}><PdfIcon mail /><BigLine>Criar PDF e compartilhar</BigLine><BigLine>via Outlook</BigLine></BigButton>
            </GroupBody>
            <GroupLabel><span>Adobe Acrobat</span></GroupLabel>
          </Group>

          <Group $w={32}>
            <GroupBody $center>
              <BigButton $w={30}>
                <Icon w={12} h={17} sw={1}><rect x="3" y="0.500" width="6" height="11" rx="3" fill="#5aa9de" stroke={BLUE} /><path d="M1 8c0 7 10 7 10 0M6 13v3.500" /></Icon>
                <BigLine>Ditar</BigLine><Chevron />
              </BigButton>
            </GroupBody>
            <GroupLabel><span>Voz</span></GroupLabel>
          </Group>

          <Group $w={47}>
            <GroupBody $center>
              <BigButton $w={44}>
                <Icon w={16} h={17} c="#e07850" sw={1}><rect x="0.500" y="0.500" width="15" height="15" fill="#fbe3d8" />{[2.5, 9].map(x => [2.5, 9].map(y => <rect key={`${x}-${y}`} x={x} y={y} width="4.500" height="4.500" fill="#fff" />))}</Icon>
                <BigLine>Suplementos</BigLine>
              </BigButton>
            </GroupBody>
            <GroupLabel><span>Suplementos</span></GroupLabel>
          </Group>

          <Group $w={37}>
            <GroupBody $center>
              <BigButton $w={34}>
                <Icon w={15} h={17} c="#8b6be0" sw={1}><path d="M2 1h5c9 1 9 14 0 14H2c-2-3 3-6 7-6C4 8 0 5 2 1z" fill="#efe9fd" /><path d="M2 8h8" /></Icon>
                <BigLine>Designer</BigLine>
              </BigButton>
            </GroupBody>
          </Group>
          <CollapseButton aria-label="Recolher faixa">
            <Icon w={8} h={10}><path d="M2 3l2.500 2.500L7 3" /></Icon>
          </CollapseButton>
        </Ribbon>
        <QuickBar>
          {quick.map(q => (
            <Slot key={q.label} $w={q.w} $on={q.on} aria-label={q.label}>{q.icon}{q.menu && <Chevron />}</Slot>
          ))}
        </QuickBar>
      </RibbonCard>

      <Workspace>
        <Thumbs>
          <Icon w={5} h={7}><path d="M1.500 2L3.500 4l-2 2" /></Icon>
          <VerticalText>Miniaturas</VerticalText>
        </Thumbs>
        <EditorColumn>
          <Editor>
            <RulerColumn>
              <RulerCorner><Icon w={4} h={4}><path d="M0.500 0v3.500H4" /></Icon></RulerCorner>
              <VRuler>
                {Array.from({ length: 18 }, (_, i) => i - 1).map(n => <VMark key={n}>{n === 0 ? '' : Math.abs(n)}</VMark>)}
              </VRuler>
            </RulerColumn>
            <Canvas>
              <SlideColumn>
                <HRuler>
                  {Array.from({ length: 34 }, (_, i) => i - 5).map(n => <HMark key={n}>{n === 0 ? '' : Math.abs(n)}</HMark>)}
                  <IndentMarker><Icon w={6} h={9} sw={0.7}><path d="M0.500 0.500h5L3 3.500l2.500 2H0.500L3 3.500zM0.500 6h5v2.500h-5z" fill="#fff" /></Icon></IndentMarker>
                </HRuler>
                <Slide>
                  <TextFrame>
                    {paragraphs.map(([kind, text], i) => <TextLine key={i} $kind={kind}>{text}</TextLine>)}
                    <RotateHandle>
                      <Icon w={14} h={24} sw={1} c="#555"><circle cx="6" cy="6" r="5" fill="#fff" /><path d="M8.500 5.500A2.600 2.600 0 1 0 8 8M13 5l-2 2.500L9 5M6 11v10" /></Icon>
                    </RotateHandle>
                    {[[0, 0], [50, 0], [0, 50], [100, 50], [0, 100], [50, 100], [100, 100]].map(([x, y]) => <Handle key={`${x}-${y}`} $x={x} $y={y} />)}
                  </TextFrame>
                </Slide>
              </SlideColumn>
            </Canvas>
            <Scrollbar>
              {arrow('M0 3l2-3 2 3z')}
              <ScrollThumb />
              {arrow('M0 0l2 3 2-3z')}
              {arrow('M0 2l2-2 2 2v2H0z')}
              {arrow('M0 0h4v2L2 4 0 2z')}
            </Scrollbar>
          </Editor>
          <Notes><NotesInput placeholder="Clique para adicionar anotações" aria-label="Anotações" /></Notes>
        </EditorColumn>
      </Workspace>

      <StatusBar>
        <StatusText>Slide 1 de 1</StatusText>
        <StatusItem $w={12} aria-label="Idioma"><Icon w={8} h={8}><path d="M0.500 1H4v6H0.500zM4 1h3.500v6H4z" /></Icon></StatusItem>
        <StatusItem $w={18} aria-label="Acessibilidade"><Icon w={8} h={8}><path d="M0.500 2h6M3.500 2v3L2 8M3.500 5L5 7.500" /><circle cx="3.500" cy="1" r="0.800" /><path d="M5 6l1 1.500L8 5" /></Icon></StatusItem>
        <span>Acessibilidade: tudo certo</span>
        <StatusItem $w={54} $right><Icon w={8} h={8}><path d="M0 4h8M0 6.500h8M2.500 2.500L4 1l1.500 1.500" /></Icon>Anotações</StatusItem>
        <StatusItem $w={22} $on aria-label="Normal"><Icon w={8} h={8}><path d="M0.500 1h7v6h-7zM0.500 5h7M2.500 1v4" /></Icon></StatusItem>
        <StatusItem $w={21} aria-label="Classificação"><Icon w={8} h={8}><path d="M0.500 1h2.500v2H0.500zM5 1h2.500v2H5zM0.500 5h2.500v2H0.500zM5 5h2.500v2H5z" /></Icon></StatusItem>
        <StatusItem $w={21} aria-label="Leitura"><Icon w={8} h={8}><path d="M0.500 1H4v6H0.500zM4 1h3.500v6H4zM1.500 3h1.500M5 3h1.500M1.500 5h1.500M5 5h1.500" /></Icon></StatusItem>
        <StatusItem $w={21} aria-label="Apresentação"><Icon w={8} h={8}><path d="M0 1h8M1 1v4h6V1M4 5v2.500M2.500 7.500h3" /></Icon></StatusItem>
        <StatusItem $w={11} aria-label="Reduzir"><Icon w={5} h={5}><path d="M0.500 2.500h4" /></Icon></StatusItem>
        <ZoomRange type="range" min={0} max={100} defaultValue={50} aria-label="Zoom" />
        <StatusItem $w={11} aria-label="Ampliar"><Icon w={5} h={5}><path d="M0.500 2.500h4M2.500 0.500v4" /></Icon></StatusItem>
        <StatusItem $w={24}>100%</StatusItem>
        <StatusItem $w={8} aria-label="Ajustar"><Icon w={8} h={8}><path d="M4 0l1.500 1.500h-3zM4 8l1.500-1.500h-3zM0 4l1.500 1.500v-3zM8 4L6.500 5.500v-3z" /></Icon></StatusItem>
      </StatusBar>

      <HighlightFrame $x={22} $y={15} $w={73} $h={38} />
      <HighlightFrame $x={402} $y={61} $w={55} $h={38} />
      <HighlightFrame $x={410} $y={110} $w={66} $h={51} />
    </Page>
  );
}
